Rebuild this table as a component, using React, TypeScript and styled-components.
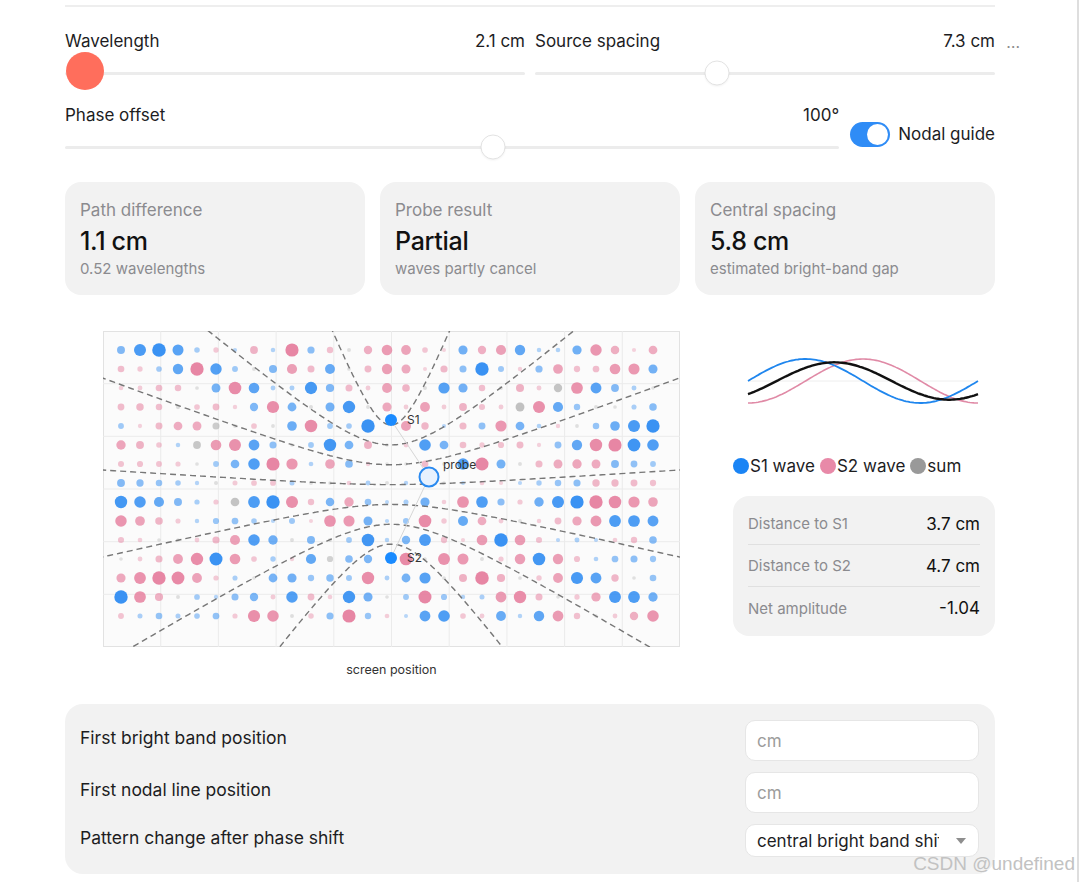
import { createGlobalStyle, styled, css } from "styled-components";

const GlobalStyle = createGlobalStyle`
  html, body {
    margin: 0;
    padding: 0;
    background: #fff;
  }
  body {
    font-family: Inter, "Liberation Sans", sans-serif;
    color: #1d1d1f;
  }
  * {
    box-sizing: border-box;
  }
`;

const Page = styled.div`
  position: relative;
  width: 1079px;
  height: 882px;
  overflow: hidden;
  border-right: 2px solid #dedede;
  padding: 5px 0 0 65px;
`;

const Main = styled.div`
  width: 930px;
  border-top: 2px solid #eeeeee;
  padding-top: 23px;
`;

const SliderRow = styled.div`
  position: relative;
  display: flex;
  gap: 10px;
`;

const More = styled.span`
  position: absolute;
  right: -25px;
  top: 1px;
  line-height: 22px;
  font-size: 16px;
  color: #8c8c8c;
`;

const SliderBlock = styled.div`
  flex: 1;
  min-width: 0;
`;

const LabelRow = styled.div`
  display: flex;
  justify-content: space-between;
  height: 22px;
  line-height: 22px;
  font-size: 17px;
  color: #1d1d1f;
`;

const Track = styled.div`
  position: relative;
  height: 24px;
  margin-top: 9px;

  &::before {
    content: "";
    position: absolute;
    left: 0;
    right: 0;
    top: 11px;
    height: 3px;
    border-radius: 2px;
    background: #ececec;
  }
`;

const Thumb = styled.div<{ $active?: boolean }>`
  position: absolute;
  top: 50%;
  width: 25px;
  height: 25px;
  border-radius: 50%;
  background: #fff;
  border: 1px solid #e3e3e3;
  box-shadow: 0 1px 2px rgba(0, 0, 0, 0.05);
  transform: translate(-50%, -50%);

  ${(p) =>
    p.$active &&
    css`
      width: 38px;
      height: 38px;
      margin-top: -2px;
      border: none;
      background: #ff6e5c;
      box-shadow: none;
    `}
`;

const PhaseRow = styled.div`
  display: flex;
  align-items: center;
  gap: 11px;
  margin-top: 19px;
`;

const ToggleWrap = styled.div`
  display: flex;
  align-items: center;
  gap: 8px;
  margin-top: 5px;
  font-size: 17px;
`;

const Toggle = styled.div<{ $on: boolean }>`
  position: relative;
  width: 40px;
  height: 25px;
  border-radius: 13px;
  background: ${(p) => (p.$on ? "#2f8cf6" : "#e0e0e0")};

  &::after {
    content: "";
    position: absolute;
    top: 2px;
    left: ${(p) => (p.$on ? "17px" : "2px")};
    width: 21px;
    height: 21px;
    border-radius: 50%;
    background: #fff;
  }
`;

const Stats = styled.div`
  display: grid;
  grid-template-columns: repeat(3, 1fr);
  gap: 15px;
  margin-top: 23px;
`;

const Card = styled.div`
  height: 113px;
  padding: 18px 15px 16px;
  border-radius: 16px;
  background: #f2f2f2;
`;

const CardLabel = styled.div`
  font-size: 17px;
  line-height: 20px;
  color: #8b8b8f;
`;

const CardValue = styled.div`
  margin-top: 7px;
  font-size: 25px;
  line-height: 28px;
  font-weight: 500;
  letter-spacing: -0.3px;
  color: #111;
`;

const CardSub = styled.div`
  margin-top: 5px;
  font-size: 15px;
  line-height: 18px;
  color: #8b8b8f;
`;

const Viz = styled.div`
  display: grid;
  grid-template-columns: 1fr 262px;
  gap: 15px;
  margin-top: 36px;
`;

const FieldCol = styled.div`
  display: flex;
  flex-direction: column;
  align-items: center;
`;

const Caption = styled.div`
  margin-top: 15px;
  font-size: 12.5px;
  line-height: 16px;
  color: #333;
`;

const SideCol = styled.div`
  display: flex;
  flex-direction: column;
`;

const Legend = styled.div`
  display: flex;
  align-items: center;
  gap: 5px;
  margin-top: 10px;
  height: 20px;
  font-size: 17px;
  color: #1d1d1f;
`;

const LegendItem = styled.span`
  display: flex;
  align-items: center;
  gap: 1px;
`;

const Swatch = styled.span<{ $color: string }>`
  width: 16px;
  height: 16px;
  border-radius: 50%;
  background: ${(p) => p.$color};
`;

const Readout = styled.div`
  margin-top: 20px;
  padding: 7px 15px;
  border-radius: 16px;
  background: #f2f2f2;
`;

const ReadoutRow = styled.div`
  display: flex;
  justify-content: space-between;
  align-items: center;
  height: 42px;
  border-bottom: 1px solid #e0e0e0;

  &:last-child {
    border-bottom: none;
  }

  span {
    font-size: 15px;
    color: #8b8b8f;
  }
  b {
    font-size: 17px;
    font-weight: 400;
    color: #111;
  }
`;

const Form = styled.div`
  display: flex;
  flex-direction: column;
  gap: 11px;
  margin-top: 26px;
  padding: 16px 16px 17px 15px;
  border-radius: 18px;
  background: #f2f2f2;
`;

const FormRow = styled.div`
  display: flex;
  justify-content: space-between;
  align-items: center;
  font-size: 17.5px;
  color: #1d1d1f;

  > span {
    padding-bottom: 7px;
  }
`;

const Input = styled.input`
  width: 234px;
  height: 41px;
  padding: 0 11px;
  border: 1px solid #e6e6e6;
  border-radius: 10px;
  background: #fff;
  font-family: inherit;
  font-size: 17px;
  outline: none;

  &::placeholder {
    color: #9c9c9c;
  }
`;

const Select = styled.div`
  display: flex;
  align-items: center;
  width: 234px;
  height: 33px;
  padding: 0 12px 0 11px;
  border: 1px solid #e6e6e6;
  border-radius: 10px;
  background: #fff;
  font-size: 17px;

  span {
    overflow: hidden;
    white-space: nowrap;
    width: 182px;
  }
  svg {
    margin-left: auto;
  }
`;

const Watermark = styled.div`
  position: absolute;
  right: 2px;
  top: 853px;
  font-family: "Liberation Sans", Arial, sans-serif;
  font-size: 19px;
  line-height: 22px;
  color: #c2c2c2;
`;

// ---- field data ----
const LAMBDA = 39.7;
const PHI = (100 * Math.PI) / 180;
const K = (2 * Math.PI) / LAMBDA;
const S1 = { x: 288, y: 89 };
const S2 = { x: 288, y: 227 };
const PROBE = { x: 326, y: 146 };
const W = 577;
const H = 316;

type Dot = { x: number; y: number; r: number; fill: string; o: number };

const dots: Dot[] = [];
for (let j = 0; j < 15; j++) {
  for (let i = 0; i < 29; i++) {
    const x = 18 + 19 * i;
    const y = 19 + 19 * j;
    const r1 = Math.hypot(x - S1.x, y - S1.y);
    const r2 = Math.hypot(x - S2.x, y - S2.y);
    if (r1 < 9 || r2 < 9) continue;
    const w1 = Math.cos(K * r1 - 0.7);
    const w2 = Math.cos(K * r2 + PHI - 0.7);
    const s = Math.abs(w1 + w2);
    const diff = Math.abs(w1) - Math.abs(w2);
    let fill = diff >= 0 ? "#2f8cf2" : "#e6809f";
    if (Math.abs(diff) < 0.08 && s < 1.1) fill = "#a3a3a3";
    dots.push({ x, y, r: 1.8 + 2.5 * s, fill, o: 0.3 + 0.34 * s });
  }
}

const hyperbolas = [-2.778, -1.778, -0.778, 0.222, 1.222, 2.222, 3.222].map((m) => {
  const D = m * LAMBDA;
  const a = Math.abs(D) / 2;
  const c = (S2.y - S1.y) / 2;
  const b = Math.sqrt(c * c - a * a);
  const sign = D > 0 ? -1 : 1;
  const pts: string[] = [];
  for (let t = -3.5; t <= 3.5; t += 0.02) {
    const x = 288 + b * Math.sinh(t);
    const y = 158 + sign * a * Math.cosh(t);
    pts.push(`${x.toFixed(1)},${y.toFixed(1)}`);
  }
  return "M" + pts.join(" L");
});

function wavePath(f: (th: number) => number) {
  const pts: string[] = [];
  for (let x = 0; x <= 230; x += 2) {
    const th = (2 * Math.PI * x) / 230;
    pts.push(`${(15 + x).toFixed(1)},${(50 + f(th)).toFixed(1)}`);
  }
  return "M" + pts.join(" L");
}

function Field() {
  const vLines = Array.from({ length: 9 }, (_, i) => ((i + 1) * W) / 10);
  const hLines = Array.from({ length: 5 }, (_, i) => ((i + 1) * H) / 6);
  return (
    <svg width={W} height={H} viewBox={`0 0 ${W} ${H}`}>
      <defs>
        <clipPath id="fieldClip">
          <rect x="0" y="0" width={W} height={H} />
        </clipPath>
      </defs>
      <rect x="0.5" y="0.5" width={W - 1} height={H - 1} fill="#fbfbfb" stroke="#e2e2e2" />
      {vLines.map((x) => (
        <line key={"v" + x} x1={x} y1="0" x2={x} y2={H} stroke="#ebebeb" />
      ))}
      {hLines.map((y) => (
        <line key={"h" + y} x1="0" y1={y} x2={W} y2={y} stroke="#ebebeb" />
      ))}
      {dots.map((d, idx) => (
        <circle key={idx} cx={d.x} cy={d.y} r={d.r} fill={d.fill} opacity={Math.min(d.o, 0.95)} />
      ))}
      <g clipPath="url(#fieldClip)">
        {hyperbolas.map((d, idx) => (
          <path key={idx} d={d} fill="none" stroke="#5f5f5f" strokeWidth="1.4" strokeDasharray="6 4" opacity="0.85" />
        ))}
      </g>
      <line x1={PROBE.x} y1={PROBE.y} x2={S1.x} y2={S1.y} stroke="#d6d6d6" />
      <line x1={PROBE.x} y1={PROBE.y} x2={S2.x} y2={S2.y} stroke="#d6d6d6" />
      <circle cx={S1.x} cy={S1.y} r="6" fill="#1a8bff" />
      <circle cx={S2.x} cy={S2.y} r="6" fill="#1a8bff" />
      <circle cx={PROBE.x} cy={PROBE.y} r="9.5" fill="#e7f1fe" stroke="#2a8af0" strokeWidth="2" />
      <text x={S1.x + 16} y={S1.y + 4} fontSize="12" fill="#333" fontFamily="Inter, sans-serif">S1</text>
      <text x={S2.x + 16} y={S2.y + 4} fontSize="12" fill="#333" fontFamily="Inter, sans-serif">S2</text>
      <text x={PROBE.x + 14} y={PROBE.y - 8} fontSize="12" fill="#333" fontFamily="Inter, sans-serif">probe</text>
    </svg>
  );
}

function Waves() {
  return (
    <svg width="262" height="115" viewBox="0 0 262 115">
      <line x1="15" y1="50" x2="245" y2="50" stroke="#eeeeee" />
      <path d={wavePath((th) => 22 * Math.cos(th))} fill="none" stroke="#e08aa6" strokeWidth="1.6" />
      <path d={wavePath((th) => -22 * Math.sin(th))} fill="none" stroke="#1f86ee" strokeWidth="1.8" />
      <path d={wavePath((th) => 13.2 * (Math.cos(th) - Math.sin(th)))} fill="none" stroke="#111" strokeWidth="2.4" />
    </svg>
  );
}

export default function App() {
  return (
    <Page>
      <GlobalStyle />
      <Main>
        <SliderRow>
          <SliderBlock>
            <LabelRow>
              <span>Wavelength</span>
              <span>2.1 cm</span>
            </LabelRow>
            <Track>
              <Thumb $active style={{ left: 20 }} />
            </Track>
          </SliderBlock>
          <SliderBlock>
            <LabelRow>
              <span>Source spacing</span>
              <span>7.3 cm</span>
            </LabelRow>
            <Track>
              <Thumb style={{ left: 182 }} />
            </Track>
          </SliderBlock>
          <More>…</More>
        </SliderRow>

        <PhaseRow>
          <SliderBlock>
            <LabelRow>
              <span>Phase offset</span>
              <span>100°</span>
            </LabelRow>
            <Track>
              <Thumb style={{ left: 428 }} />
            </Track>
          </SliderBlock>
          <ToggleWrap>
            <Toggle $on />
            <span>Nodal guide</span>
          </ToggleWrap>
        </PhaseRow>

        <Stats>
          <Card>
            <CardLabel>Path difference</CardLabel>
            <CardValue>1.1 cm</CardValue>
            <CardSub>0.52 wavelengths</CardSub>
          </Card>
          <Card>
            <CardLabel>Probe result</CardLabel>
            <CardValue>Partial</CardValue>
            <CardSub>waves partly cancel</CardSub>
          </Card>
          <Card>
            <CardLabel>Central spacing</CardLabel>
            <CardValue>5.8 cm</CardValue>
            <CardSub>estimated bright-band gap</CardSub>
          </Card>
        </Stats>

        <Viz>
          <FieldCol>
            <Field />
            <Caption>screen position</Caption>
          </FieldCol>
          <SideCol>
            <Waves />
            <Legend>
              <LegendItem>
                <Swatch $color="#1a84f5" />
                S1 wave
              </LegendItem>
              <LegendItem>
                <Swatch $color="#e889a8" />
                S2 wave
              </LegendItem>
              <LegendItem>
                <Swatch $color="#999999" />
                sum
              </LegendItem>
            </Legend>
            <Readout>
              <ReadoutRow>
                <span>Distance to S1</span>
                <b>3.7 cm</b>
              </ReadoutRow>
              <ReadoutRow>
                <span>Distance to S2</span>
                <b>4.7 cm</b>
              </ReadoutRow>
              <ReadoutRow>
                <span>Net amplitude</span>
                <b>-1.04</b>
              </ReadoutRow>
            </Readout>
          </SideCol>
        </Viz>

        <Form>
          <FormRow>
            <span>First bright band position</span>
            <Input placeholder="cm" />
          </FormRow>
          <FormRow>
            <span>First nodal line position</span>
            <Input placeholder="cm" />
          </FormRow>
          <FormRow>
            <span>Pattern change after phase shift</span>
            <Select>
              <span>central bright band shift</span>
              <svg width="10" height="6" viewBox="0 0 10 6">
                <path d="M0 0 L10 0 L5 6 Z" fill="#8e8e8e" />
              </svg>
            </Select>
          </FormRow>
        </Form>
      </Main>
      <Watermark>CSDN @undefined</Watermark>
    </Page>
  );
}
